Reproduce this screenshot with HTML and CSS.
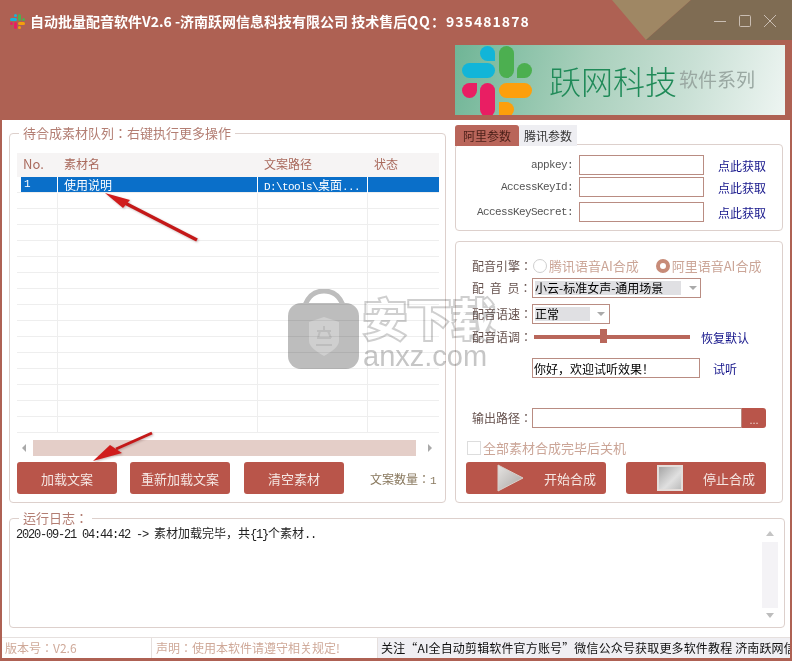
FILE: index.html
```html
<!DOCTYPE html>
<html>
<head>
<meta charset="UTF-8">
<meta name="viewport" content="width=device-width, initial-scale=1.0">
<title>自动批量配音软件</title>
<link rel="stylesheet" href="styles.css">
</head>
<body>
    <div class="window">
        <!-- corner decoration behind the window buttons -->
        <svg class="corner" width="180" height="40" viewBox="0 0 180 40">
            <polygon points="0,0 79,0 34,40" fill="#9f8764"/>
            <polygon points="79,0 180,0 180,40 34,40" fill="#7f6c53"/>
        </svg>

        <div class="header">
            <div class="titlebar">
                <svg class="app-icon" width="16" height="16" viewBox="0 0 16 16">
                    <rect x="0" y="5" width="7" height="3" rx="1.5" fill="#18b4d8"/>
                    <rect x="4" y="1" width="3" height="3" rx="1.5" fill="#18b4d8"/>
                    <rect x="8" y="1" width="3" height="7" rx="1.5" fill="#4caf50"/>
                    <rect x="12" y="5" width="3" height="3" rx="1.5" fill="#4caf50"/>
                    <rect x="0" y="9" width="3" height="3" rx="1.5" fill="#e91e63"/>
                    <rect x="4" y="9" width="3" height="7" rx="1.5" fill="#e91e63"/>
                    <rect x="8" y="9" width="7" height="3" rx="1.5" fill="#f59e0b"/>
                    <rect x="8" y="13" width="3" height="3" rx="1.5" fill="#f59e0b"/>
                </svg>
                <span class="app-title">自动批量配音软件V2.6 -济南跃网信息科技有限公司 技术售后<span class="app-qq">QQ：935481878</span></span>
                <div class="win-buttons">
                    <svg width="12" height="12" viewBox="0 0 12 12"><path d="M0 6.5H12" stroke="#c9bdb2" fill="none"/></svg>
                    <svg width="12" height="12" viewBox="0 0 12 12"><rect x="0.5" y="0.5" width="11" height="11" rx="1" stroke="#c9bdb2" fill="none"/></svg>
                    <svg width="12" height="12" viewBox="0 0 12 12"><path d="M0 0L12 12M12 0L0 12" stroke="#c9bdb2" fill="none"/></svg>
                </div>
            </div>
            <div class="banner">
                <svg class="banner-logo" width="70" height="70" viewBox="0 0 70 70">
                    <rect x="0" y="18" width="33" height="15" rx="7.5" fill="#12b5d8"/>
                    <path d="M18 8.5a7.5 7.5 0 0 1 15 0V16H25.500a7.500 7.500 0 0 1-7.500-7.500z" fill="#12b5d8"/>
                    <rect x="37" y="1" width="15" height="32" rx="7.5" fill="#4caf50"/>
                    <path d="M55 33V25.500a7.500 7.500 0 1 1 7.500 7.500z" fill="#4caf50"/>
                    <path d="M15 38V45.500a7.500 7.500 0 1 1-7.500-7.500z" fill="#e91e63"/>
                    <rect x="18" y="38" width="15" height="34" rx="7.5" fill="#e91e63"/>
                    <rect x="37" y="38" width="33" height="15" rx="7.500" fill="#fd9f0c"/>
                    <path d="M37 57h7.500a7.500 7.500 0 0 1 0 15h-7.500z" fill="#fd9f0c"/>
                </svg>
                <span class="banner-name">跃网科技</span>
                <span class="banner-sub">软件系列</span>
            </div>
        </div>

        <div class="client">
            <div class="columns">
                <!-- material queue -->
                <div class="group queue">
                    <span class="group-title">待合成素材队列：右键执行更多操作</span>
                    <div class="grid-row grid-head">
                        <span>No.</span><span>素材名</span><span>文案路径</span><span>状态</span>
                    </div>
                    <div class="grid-row grid-selected">
                        <span class="cell-mono">1</span><span>使用说明</span><span class="cell-mono">D:\tools\<b class="cjk">桌面</b>...</span><span></span>
                    </div>
                    <div class="grid-row"><span></span><span></span><span></span><span></span></div>
                    <div class="grid-row"><span></span><span></span><span></span><span></span></div>
                    <div class="grid-row"><span></span><span></span><span></span><span></span></div>
                    <div class="grid-row"><span></span><span></span><span></span><span></span></div>
                    <div class="grid-row"><span></span><span></span><span></span><span></span></div>
                    <div class="grid-row"><span></span><span></span><span></span><span></span></div>
                    <div class="grid-row"><span></span><span></span><span></span><span></span></div>
                    <div class="grid-row"><span></span><span></span><span></span><span></span></div>
                    <div class="grid-row"><span></span><span></span><span></span><span></span></div>
                    <div class="grid-row"><span></span><span></span><span></span><span></span></div>
                    <div class="grid-row"><span></span><span></span><span></span><span></span></div>
                    <div class="grid-row"><span></span><span></span><span></span><span></span></div>
                    <div class="grid-row"><span></span><span></span><span></span><span></span></div>
                    <div class="grid-row"><span></span><span></span><span></span><span></span></div>
                    <div class="grid-row"><span></span><span></span><span></span><span></span></div>
                    <div class="hscroll">
                        <i class="arrow-left"></i>
                        <div class="hscroll-thumb"></div>
                        <i class="arrow-right"></i>
                    </div>
                    <div class="queue-actions">
                        <button class="btn btn-load">加载文案</button>
                        <button class="btn btn-reload">重新加载文案</button>
                        <button class="btn btn-clear">清空素材</button>
                        <span class="count">文案数量：<span class="count-num">1</span></span>
                    </div>
                </div>

                <div class="side">
                    <div class="tabs">
                        <span class="tab tab-active">阿里参数</span>
                        <span class="tab">腾讯参数</span>
                    </div>
                    <div class="params">
                        <div class="param-row">
                            <label class="param-label">appkey:</label>
                            <input class="field param-input" type="text">
                            <a class="link">点此获取</a>
                        </div>
                        <div class="param-row">
                            <label class="param-label">AccessKeyId:</label>
                            <input class="field param-input" type="text">
                            <a class="link">点此获取</a>
                        </div>
                        <div class="param-row param-row-last">
                            <label class="param-label">AccessKeySecret:</label>
                            <input class="field param-input" type="text">
                            <a class="link">点此获取</a>
                        </div>
                    </div>

                    <div class="group settings">
                        <div class="row row-engine">
                            <span class="row-label">配音引擎：</span>
                            <i class="radio"></i><span class="radio-text">腾讯语音AI合成</span>
                            <i class="radio radio-on"></i><span class="radio-text">阿里语音AI合成</span>
                        </div>
                        <div class="row">
                            <span class="row-label row-label-wide">配 音 员：</span>
                            <div class="combo combo-voice"><span class="combo-text">小云-标准女声-通用场景</span><i class="combo-arrow"></i></div>
                        </div>
                        <div class="row row-speed">
                            <span class="row-label">配音语速：</span>
                            <div class="combo combo-speed"><span class="combo-text">正常</span><i class="combo-arrow"></i></div>
                        </div>
                        <div class="row row-pitch">
                            <span class="row-label">配音语调：</span>
                            <div class="slider"><i class="slider-thumb"></i></div>
                            <a class="link link-reset">恢复默认</a>
                        </div>
                        <div class="row row-try">
                            <span class="row-label"></span>
                            <input class="field try-input" type="text" value="你好，欢迎试听效果！">
                            <a class="link link-try">试听</a>
                        </div>
                        <div class="row row-path">
                            <span class="row-label">输出路径：</span>
                            <input class="field path-input" type="text">
                            <button class="path-btn">...</button>
                        </div>
                        <div class="row row-check">
                            <i class="check"></i><span class="radio-text">全部素材合成完毕后关机</span>
                        </div>
                        <div class="row-actions">
                            <button class="btn btn-run">
                                <svg width="27" height="28" viewBox="0 0 27 28">
                                    <defs>
                                        <linearGradient id="playFill" x1="0" y1="0" x2="1" y2="1">
                                            <stop offset="0" stop-color="#e6e4e2"/>
                                            <stop offset="1" stop-color="#a9a6a4"/>
                                        </linearGradient>
                                    </defs>
                                    <polygon points="1,1 26,14 1,27" fill="url(#playFill)" stroke="#d9cfca"/>
                                </svg>
                                开始合成
                            </button>
                            <button class="btn btn-run">
                                <span class="stop-icon"></span>
                                停止合成
                            </button>
                        </div>
                    </div>
                </div>
            </div>

            <!-- running log -->
            <div class="group log">
                <span class="group-title">运行日志：</span>
                <div class="log-text">2020-09-21 04:44:42 -&gt; <b class="cjk">素材加载完毕，共</b>{1}<b class="cjk">个素材</b>..</div>
                <div class="vscroll">
                    <i class="arrow-up"></i>
                    <div class="vscroll-thumb"></div>
                    <i class="arrow-down"></i>
                </div>
            </div>

            <div class="statusbar">
                <span class="status-cell status-version">版本号：V2.6</span>
                <span class="status-cell status-note">声明：使用本软件请遵守相关规定!</span>
                <span class="status-cell status-ticker">关注“AI全自动剪辑软件官方账号”微信公众号获取更多软件教程 济南跃网信息科技有限公司</span>
            </div>
        </div>

        <!-- site stamp laid over the window -->
        <div class="stamp">
            <svg width="72" height="80" viewBox="0 0 72 80">
                <path d="M17 16C21 6 28 2 36 2s15 4 19 14" stroke="#bdbdbd" stroke-width="5" fill="none"/>
                <rect x="0" y="14" width="71" height="66" rx="13" fill="#bdbdbd"/>
                <path d="M21 33l15-5 15 5v19c0 6-8 11-15 15-7-4-15-9-15-15z" fill="#cfcfcf"/>
                <path d="M29 42h14M36 37v5M29 49h14M32 42l-2 7M40 42l3 7M28 56h16" stroke="#bdbdbd" stroke-width="2" fill="none"/>
            </svg>
            <div class="stamp-words">
                <span class="stamp-cn">安下载</span>
                <span class="stamp-en">anxz.com</span>
            </div>
        </div>

        <!-- red hint arrows -->
        <svg class="hint hint-top" width="100" height="60" viewBox="0 0 100 60">
            <path d="M94 50L20 12" stroke="#c41818" stroke-width="3.500" fill="none"/>
            <polygon points="2,3 27,10 20,18" fill="#d01c1c"/>
        </svg>
        <svg class="hint hint-bottom" width="70" height="36" viewBox="0 0 70 36">
            <path d="M62 3L26 19" stroke="#c41818" stroke-width="3" fill="none"/>
            <polygon points="3,31 20,15 32,23" fill="#d01c1c"/>
        </svg>
    </div>
</body>
</html>
```

FILE: styles.css
```css
* {
    box-sizing: border-box;
}

body {
    margin: 0;
    font-family: "Noto Sans CJK SC", "Liberation Sans", sans-serif;
    font-size: 13px;
    overflow: hidden;
}

.window {
    position: relative;
    width: 792px;
    height: 661px;
    padding: 0 2px 3px 2px;
    background-color: #ae6153;
    overflow: hidden;
}

.corner {
    position: absolute;
    top: 0;
    left: 612px;
}

/* header */
.header {
    position: relative;
    height: 120px;
}

.titlebar {
    display: flex;
    align-items: center;
    height: 42px;
    padding-left: 8px;
}

.app-icon {
    margin-right: 4px;
}

.app-title {
    color: #fff;
    font-size: 14px;
    font-weight: bold;
    white-space: nowrap;
}

.app-qq {
    letter-spacing: 1.05px;
}

.win-buttons {
    display: flex;
    gap: 13px;
    margin-left: auto;
    margin-right: 14px;
}

.banner {
    display: flex;
    align-items: center;
    width: 330px;
    height: 70px;
    margin-left: 453px;
    margin-top: 3px;
    overflow: hidden;
    background: linear-gradient(105deg, #6fb596 0%, #a9d0bc 40%, #c9e0d5 70%, #eef5f2 100%);
}

.banner-logo {
    flex: none;
    margin-left: 7px;
}

.banner-name {
    margin-left: 17px;
    color: #1f8a58;
    font-size: 32px;
    font-weight: 300;
}

.banner-sub {
    margin-left: 2px;
    margin-bottom: 4px;
    color: #9aa8a2;
    font-size: 19px;
}

/* client area */
.client {
    height: 538px;
    padding: 5px 0 0 7px;
    background-color: #fff;
}

.columns {
    display: flex;
    gap: 9px;
    height: 393px;
}

.group {
    position: relative;
    border: 1px solid #ddd0cc;
    border-radius: 4px;
}

.group-title {
    position: absolute;
    top: -8px;
    left: 9px;
    padding: 0 4px;
    background-color: #fff;
    color: #b37e73;
    font-family: "Noto Sans CJK JP", sans-serif;
    font-size: 13px;
    line-height: 14px;
    white-space: nowrap;
}

/* queue */
.queue {
    width: 437px;
    height: 370px;
    margin-top: 8px;
    padding: 19px 7px 0 7px;
}

.grid-row {
    display: grid;
    grid-template-columns: 41px 200px 110px 71px;
    width: 422px;
    height: 16px;
    border-bottom: 1px solid #eeeeee;
    font-size: 12px;
    line-height: 15px;
}

.grid-row span {
    padding-left: 6px;
    border-right: 1px solid #eeeeee;
    white-space: nowrap;
}

.grid-row span:last-child {
    border-right: none;
}

.grid-head {
    height: 24px;
    background-color: #f6f4f4;
    border-bottom: none;
    color: #a9695c;
    line-height: 22px;
}

.grid-head span {
    border-right: none;
}

.grid-head span:first-child {
    font-size: 13px;
}

.grid-selected {
    background: linear-gradient(to right, transparent 4px, #0a6fc9 4px);
    color: #fff;
}

.grid-selected span {
    border-right-color: #fff;
}

.grid-selected .cell-mono:first-child {
    padding-left: 7px;
}

.cell-mono {
    font-family: "Liberation Mono", "Noto Sans CJK SC", monospace;
    font-size: 11px;
    letter-spacing: -0.6px;
}

.cjk {
    font-family: "Noto Sans CJK SC", sans-serif;
    font-size: 12px;
    font-weight: normal;
    letter-spacing: 0;
}

.hscroll {
    display: flex;
    align-items: center;
    width: 422px;
    height: 16px;
    margin-top: 7px;
    padding: 0 5px;
}

.hscroll-thumb {
    width: 383px;
    height: 16px;
    margin-left: 7px;
    background-color: #e4cec8;
}

.arrow-left,
.arrow-right,
.arrow-up,
.arrow-down {
    display: block;
    width: 0;
    height: 0;
    border-style: solid;
    border-color: transparent;
}

.arrow-left {
    border-width: 4px 4px 4px 0;
    border-right-color: #a9a9a9;
}

.arrow-right {
    margin-left: 12px;
    border-width: 4px 0 4px 4px;
    border-left-color: #a9a9a9;
}

.queue-actions {
    display: flex;
    align-items: center;
    margin-top: 6px;
}

.btn {
    display: flex;
    align-items: center;
    justify-content: center;
    height: 32px;
    border: none;
    border-radius: 3px;
    background-color: #b9554a;
    color: #f5e6e2;
    font-family: inherit;
    font-size: 13px;
}

.btn-load,
.btn-reload,
.btn-clear {
    width: 100px;
}

.btn-reload {
    margin-left: 13px;
}

.btn-clear {
    margin-left: 14px;
}

.count {
    margin-left: 26px;
    color: #8a7a60;
    font-family: "Noto Sans CJK JP", sans-serif;
    font-size: 12px;
    white-space: nowrap;
}

.count-num {
    font-family: "Liberation Mono", monospace;
    font-size: 11px;
}

/* parameter tabs */
.side {
    width: 328px;
}

.tabs {
    position: relative;
    display: flex;
    height: 21px;
}

.tab {
    width: 58px;
    background-color: #eeeef2;
    color: #333;
    font-size: 12px;
    line-height: 21px;
    text-align: center;
}

.tab-active {
    width: 64px;
    border-radius: 3px 3px 0 0;
    background-color: #b9655a;
    color: #4a1f18;
}

.params {
    height: 87px;
    margin-top: -2px;
    padding-top: 10px;
    border: 1px solid #ddd0cc;
    border-radius: 4px;
}

.param-row {
    display: flex;
    align-items: center;
    height: 20px;
    margin-bottom: 2px;
}

.param-row-last {
    margin-top: 5px;
    margin-bottom: 0;
}

.param-label {
    width: 117px;
    color: #555;
    font-family: "Liberation Mono", monospace;
    font-size: 11px;
    letter-spacing: -0.6px;
    text-align: right;
}

.field {
    height: 20px;
    padding: 0 1px;
    border: 1px solid #b98c82;
    background-color: #fff;
    color: #000;
    font-family: inherit;
    font-size: 12px;
    outline: none;
}

.param-input {
    width: 125px;
    margin-left: 6px;
}

.link {
    color: #14148a;
    font-size: 12px;
    text-decoration: none;
    white-space: nowrap;
}

.param-row .link {
    margin-left: 14px;
}

/* voice settings */
.settings {
    height: 262px;
    margin-top: 10px;
    padding: 14px 0 0 16px;
}

.row {
    display: flex;
    align-items: center;
    height: 20px;
    margin-top: 2px;
}

.row-engine {
    margin-top: 0;
}

.row-speed {
    margin-top: 6px;
}

.row-pitch {
    margin-top: 3px;
}

.row-try {
    margin-top: 11px;
}

.row-path {
    margin-top: 30px;
}

.row-check {
    height: 14px;
    margin-top: 13px;
    margin-left: -5px;
}

.row-label {
    width: 60px;
    flex: none;
    padding-bottom: 2px;
    color: #66524e;
    font-family: "Noto Sans CJK JP", sans-serif;
    font-size: 12px;
    white-space: pre;
}

.row-label-wide {
    word-spacing: 3px;
}

.radio {
    display: block;
    width: 14px;
    height: 14px;
    margin-left: 1px;
    margin-right: 2px;
    border: 1px solid #cfcfcf;
    border-radius: 50%;
}

.radio-on {
    margin-left: 17px;
    border: 4px solid #c78b78;
}

.radio-text {
    padding-bottom: 2px;
    color: #cba597;
    font-size: 13px;
    white-space: nowrap;
}

.combo {
    display: flex;
    align-items: center;
    height: 20px;
    padding-left: 2px;
    border: 1px solid #b98c82;
}

.combo-text {
    display: block;
    height: 14px;
    background-color: #e0e0e3;
    color: #000;
    font-size: 12px;
    line-height: 14px;
    white-space: nowrap;
}

.combo-voice {
    width: 169px;
}

.combo-voice .combo-text {
    width: 146px;
}

.combo-voice .combo-arrow {
    margin-left: 8px;
}

.combo-speed {
    width: 78px;
}

.combo-speed .combo-text {
    width: 55px;
}

.combo-arrow {
    width: 0;
    height: 0;
    margin-left: 7px;
    border-style: solid;
    border-width: 4px 4px 0 4px;
    border-color: #aaa transparent transparent transparent;
}

.slider {
    position: relative;
    width: 156px;
    height: 4px;
    margin-left: 2px;
    background-color: #b9675b;
}

.slider-thumb {
    position: absolute;
    top: -6px;
    left: 66px;
    width: 7px;
    height: 14px;
    background-color: #b9675b;
}

.link-reset {
    margin-left: 11px;
}

.try-input {
    width: 168px;
}

.link-try {
    margin-left: 13px;
}

.path-input {
    width: 210px;
}

.path-btn {
    width: 24px;
    height: 20px;
    padding: 0;
    border: none;
    border-radius: 0 3px 3px 0;
    background-color: #b9554a;
    color: #f0dcd7;
    font-size: 11px;
    line-height: 24px;
}

.check {
    display: block;
    width: 14px;
    height: 14px;
    margin-right: 2px;
    border: 1px solid #ddd;
}

.row-actions {
    display: flex;
    gap: 20px;
    margin-top: 7px;
    margin-left: -6px;
}

.btn-run {
    justify-content: flex-start;
    gap: 20px;
    width: 140px;
    padding-left: 31px;
}

.stop-icon {
    display: block;
    flex: none;
    width: 26px;
    height: 26px;
    border: 2px solid #e4dedb;
    background: linear-gradient(135deg, #a5a5a5, #e0e0e0 60%, #bcbcbc);
}

/* log */
.log {
    width: 776px;
    height: 110px;
    padding-top: 6px;
}

.log-text {
    padding-left: 6px;
    color: #222;
    font-family: "Liberation Mono", "Noto Sans CJK SC", monospace;
    font-size: 12px;
    letter-spacing: -1.2px;
    line-height: 16px;
}

.vscroll {
    position: absolute;
    top: 12px;
    right: 6px;
    display: flex;
    flex-direction: column;
    align-items: center;
    width: 16px;
    height: 87px;
}

.vscroll-thumb {
    flex: 1;
    width: 16px;
    margin-top: 6px;
    margin-bottom: 5px;
    background-color: #f4f3f6;
}

.arrow-up {
    border-width: 0 4px 5px 4px;
    border-bottom-color: #c4c4c4;
}

.arrow-down {
    border-width: 5px 4px 0 4px;
    border-top-color: #bdbdbd;
}

/* status bar */
.statusbar {
    display: flex;
    height: 21px;
    margin-top: 9px;
    margin-left: -7px;
    border-top: 1px solid #e6e0de;
    font-size: 12px;
    line-height: 20px;
    white-space: nowrap;
}

.status-cell {
    display: block;
    overflow: hidden;
    padding-left: 3px;
    border-right: 1px solid #e6e0de;
    color: #cfa999;
    font-family: "Noto Sans CJK JP", sans-serif;
}

.status-version {
    width: 150px;
}

.status-note {
    width: 226px;
    padding-left: 4px;
}

.status-ticker {
    flex: 1;
    padding-left: 3px;
    border-right: none;
    background-color: #f0eff3;
    color: #111;
    font-family: "Noto Sans CJK SC", sans-serif;
    letter-spacing: 0.15px;
}

/* overlays */
.stamp {
    position: absolute;
    top: 289px;
    left: 288px;
    display: flex;
    gap: 3px;
    mix-blend-mode: multiply;
    pointer-events: none;
}

.stamp-words {
    display: flex;
    flex-direction: column;
}

.stamp-cn {
    color: #fff;
    font-size: 44px;
    font-weight: bold;
    line-height: 56px;
    -webkit-text-stroke: 4px #cfcfcf;
    paint-order: stroke fill;
    white-space: nowrap;
}

.stamp-en {
    margin-top: -2px;
    color: #c6c6c6;
    font-family: "Liberation Sans", sans-serif;
    font-size: 29px;
    line-height: 26px;
}

.hint {
    position: absolute;
    filter: drop-shadow(1px 1px 1px rgba(120, 80, 80, 0.4));
}

.hint-top {
    top: 190px;
    left: 103px;
}

.hint-bottom {
    top: 430px;
    left: 90px;
}
```
